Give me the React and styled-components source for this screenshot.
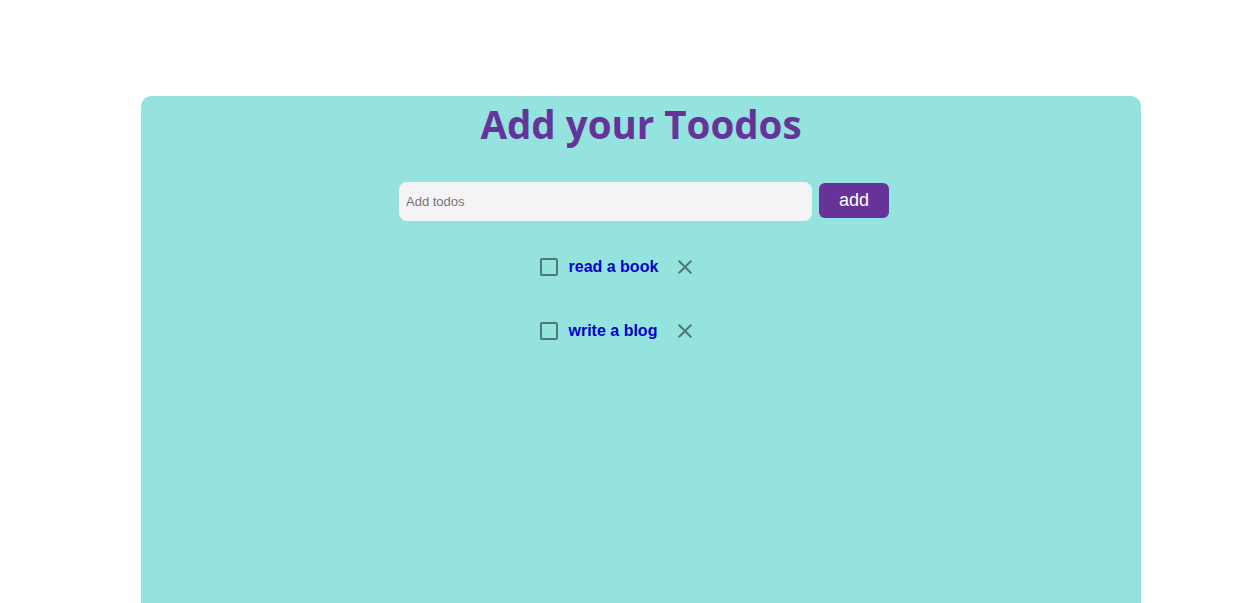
import React from "react";
import styled, { createGlobalStyle } from "styled-components";
import { MdCheckBoxOutlineBlank, MdClose } from "react-icons/md";

const Global = createGlobalStyle`
  html, body { margin: 0; padding: 0; background: #ffffff; }
  body { font-family: "Liberation Sans", Arial, sans-serif; }
`;

const Page = styled.div`
  padding-top: 96px;
  display: flex;
  justify-content: center;
`;

const Card = styled.div`
  width: 1000px;
  height: 520px;
  margin-left: 24px;
  background: #94e3de;
  border-radius: 10px;
  display: flex;
  flex-direction: column;
  align-items: center;
`;

const Title = styled.h1`
  margin: 0;
  font-family: "Open Sans", sans-serif;
  font-weight: 700;
  font-size: 38.5px;
  line-height: 56px;
  color: #663399;
`;

const Form = styled.form`
  margin-top: 30px;
  display: flex;
  align-items: flex-start;
  gap: 7px;
  margin-left: 6px;
`;

const Input = styled.input`
  width: 413px;
  height: 39px;
  box-sizing: border-box;
  border: none;
  outline: none;
  border-radius: 8px;
  background: #f4f4f4;
  padding: 0 7px;
  font-family: "Liberation Sans", Arial, sans-serif;
  font-size: 13px;
  color: #333;
  &::placeholder { color: #757575; }
`;

const Button = styled.button`
  margin-top: 1px;
  width: 70px;
  height: 35px;
  border: none;
  border-radius: 6px;
  background: #663399;
  color: #ffffff;
  font-family: "Liberation Sans", Arial, sans-serif;
  font-size: 18px;
  cursor: pointer;
`;

const List = styled.ul`
  list-style: none;
  margin: 34px 0 0;
  padding: 0 49px 0 0;
  display: flex;
  flex-direction: column;
  gap: 40px;
`;

const Item = styled.li`
  display: flex;
  align-items: center;
  height: 24px;
`;

const Icon = styled.span`
  display: flex;
  color: #4d7873;
  font-size: 24px;
  cursor: pointer;
`;

const Label = styled.span`
  margin: 0 8px 0 8px;
  font-family: "Liberation Sans", Arial, sans-serif;
  font-weight: 700;
  font-size: 16px;
  color: #0000cd;
  width: 96px;
`;

const todos = ["read a book", "write a blog"];

export default function App() {
  return (
    <>
      <Global />
      <Page>
        <Card>
          <Title>Add your Toodos</Title>
          <Form onSubmit={(e) => e.preventDefault()}>
            <Input placeholder="Add todos" />
            <Button type="submit">add</Button>
          </Form>
          <List>
            {todos.map((t) => (
              <Item key={t}>
                <Icon><MdCheckBoxOutlineBlank /></Icon>
                <Label>{t}</Label>
                <Icon><MdClose /></Icon>
              </Item>
            ))}
          </List>
        </Card>
      </Page>
    </>
  );
}
